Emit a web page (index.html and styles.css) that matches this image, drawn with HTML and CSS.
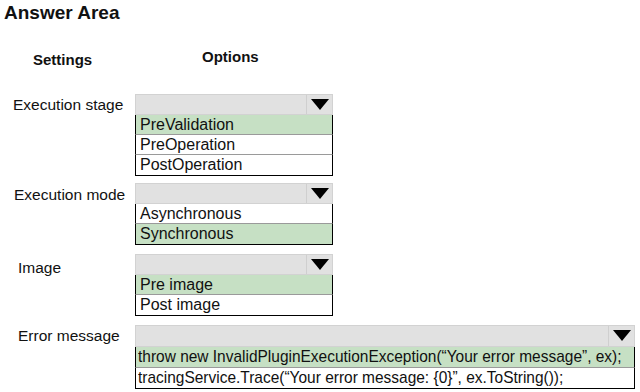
FILE: index.html
```html
<!DOCTYPE html>
<html lang="en">
<head>
    <meta charset="UTF-8">
    <title>Answer Area</title>
    <link rel="stylesheet" href="styles.css">
</head>
<body>
    <div class="answer-area">
        <h1>Answer Area</h1>
        <div class="columns">
            <div class="col-settings">Settings</div>
            <div class="col-options">Options</div>
        </div>

        <div class="row row-stage">
            <div class="label">Execution stage</div>
            <div class="select">
                <div class="select-head"><span class="arrow"></span></div>
                <div class="option picked">PreValidation</div>
                <div class="option">PreOperation</div>
                <div class="option">PostOperation</div>
            </div>
        </div>

        <div class="row row-mode">
            <div class="label">Execution mode</div>
            <div class="select">
                <div class="select-head"><span class="arrow"></span></div>
                <div class="option">Asynchronous</div>
                <div class="option picked">Synchronous</div>
            </div>
        </div>

        <div class="row row-image">
            <div class="label">Image</div>
            <div class="select">
                <div class="select-head"><span class="arrow"></span></div>
                <div class="option picked">Pre image</div>
                <div class="option">Post image</div>
            </div>
        </div>

        <div class="row row-error">
            <div class="label">Error message</div>
            <div class="select wide">
                <div class="select-head"><span class="arrow"></span></div>
                <div class="option picked"><span class="narrow">throw new InvalidPluginExecutionException(“Your error message”, ex);</span></div>
                <div class="option"><span class="narrow">tracingService.Trace(“Your error message: {0}”, ex.ToString());</span></div>
            </div>
        </div>
    </div>
</body>
</html>
```
FILE: styles.css
```css
body {
    margin: 0;
    background: #ffffff;
    font-family: 'Liberation Sans', Arial, sans-serif;
    color: #111111;
}

.answer-area {
    width: 640px;
    height: 392px;
    overflow: hidden;
}

h1 {
    margin: 0;
    padding: 1px 0 0 4px;
    font-size: 19px;
    line-height: 24px;
    font-weight: bold;
}

.columns {
    display: flex;
    margin-top: 23px;
    font-size: 15px;
    font-weight: bold;
}

.col-settings {
    width: 202px;
    padding: 3px 0 0 33px;
    box-sizing: border-box;
}

.row {
    display: flex;
    align-items: flex-start;
}

.row-stage { margin-top: 26px; }
.row-mode { margin-top: 7px; }
.row-image { margin-top: 9px; }
.row-error { margin-top: 9px; }

.label {
    width: 135px;
    box-sizing: border-box;
    padding-left: 13px;
    font-size: 15.5px;
    line-height: 21px;
}

.row-mode .label { padding-left: 14px; padding-top: 1px; }
.row-image .label { padding-left: 18px; padding-top: 3px; }
.row-error .label { padding-left: 18px; }

.select {
    width: 198px;
}

.select.wide {
    width: 500px;
}

.select-head {
    height: 21px;
    box-sizing: border-box;
    background: #e1e1e1;
    border: 1px solid #d2d2d2;
    display: flex;
    justify-content: flex-end;
}

.wide .select-head {
    height: 22px;
}

.arrow {
    width: 25px;
    height: 100%;
    border-left: 1px solid #cfcfcf;
    position: relative;
}

.arrow::after {
    content: '';
    position: absolute;
    left: 4px;
    top: 4px;
    border-left: 9px solid transparent;
    border-right: 9px solid transparent;
    border-top: 11px solid #000000;
}

.option {
    height: 20px;
    box-sizing: border-box;
    padding-left: 4px;
    font-size: 16px;
    line-height: 19px;
    border-left: 1px solid #000000;
    border-right: 1px solid #000000;
    border-bottom: 1px solid #9a9a9a;
    background: #ffffff;
    white-space: nowrap;
    overflow: hidden;
}

.option:first-of-type {
    border-top: 1px solid #000000;
    height: 21px;
}

.option:last-child {
    border-bottom: 1px solid #000000;
    height: 21px;
}

.option.picked {
    background: #c6e0c4;
}

.row-error .option {
    height: 21px;
    padding-left: 2px;
    line-height: 20px;
}

.row-error .option:first-of-type {
    height: 22px;
}

.narrow {
    display: inline-block;
    font-size: 17px;
    transform: scaleX(0.91);
    transform-origin: left center;
}
```
